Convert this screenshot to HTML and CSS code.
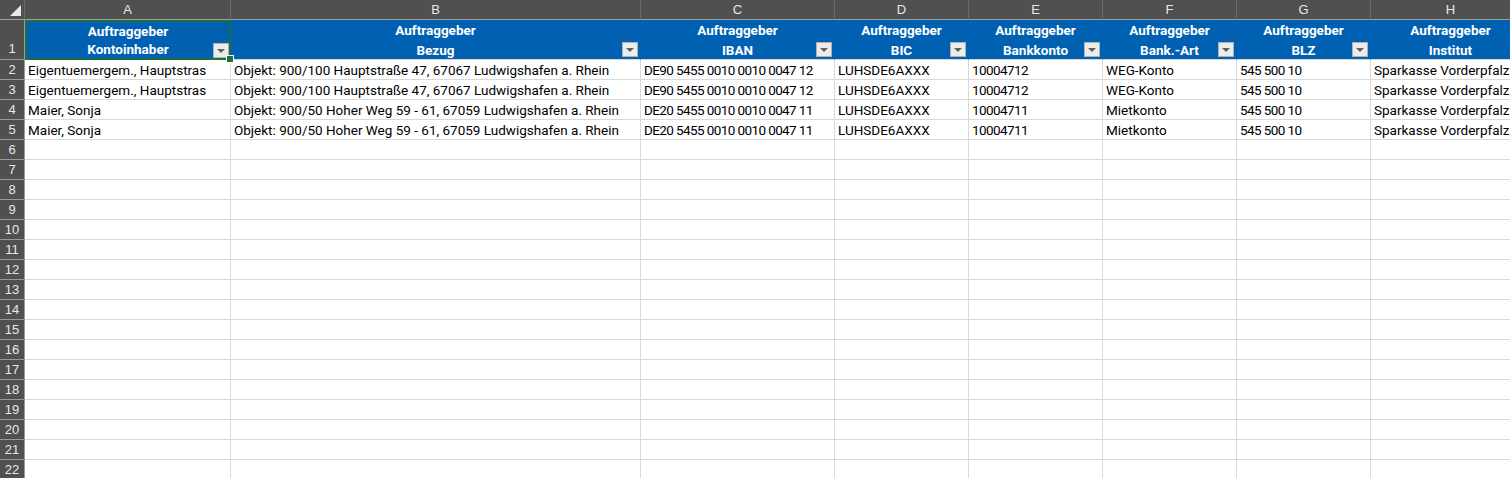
FILE: index.html
```html
<!DOCTYPE html>
<html lang="de">

<head>
    <meta charset="UTF-8">
    <title>Auftraggeber</title>
    <link rel="stylesheet" href="styles.css">
</head>

<body>
    <div class="sheet" id="sheet">
        <div class="corner"><span class="corner-tri"></span></div>
        <div class="col-head">A</div>
        <div class="col-head">B</div>
        <div class="col-head">C</div>
        <div class="col-head">D</div>
        <div class="col-head">E</div>
        <div class="col-head">F</div>
        <div class="col-head">G</div>
        <div class="col-head">H</div>

        <div class="row-head tall">1</div>
        <div class="th selected">Auftraggeber<br>Kontoinhaber<span class="filter"></span><span class="handle"></span></div>
        <div class="th">Auftraggeber<br>Bezug<span class="filter"></span></div>
        <div class="th">Auftraggeber<br>IBAN<span class="filter"></span></div>
        <div class="th">Auftraggeber<br>BIC<span class="filter"></span></div>
        <div class="th">Auftraggeber<br>Bankkonto<span class="filter"></span></div>
        <div class="th">Auftraggeber<br>Bank.-Art<span class="filter"></span></div>
        <div class="th">Auftraggeber<br>BLZ<span class="filter"></span></div>
        <div class="th">Auftraggeber<br>Institut</div>

        <div class="row-head">2</div>
        <div class="td">Eigentuemergem., Hauptstras</div>
        <div class="td">Objekt: 900/100 Hauptstraße 47, 67067 Ludwigshafen a. Rhein</div>
        <div class="td num">DE90 5455 0010 0010 0047 12</div>
        <div class="td">LUHSDE6AXXX</div>
        <div class="td num">10004712</div>
        <div class="td">WEG-Konto</div>
        <div class="td num">545 500 10</div>
        <div class="td">Sparkasse Vorderpfalz</div>

        <div class="row-head">3</div>
        <div class="td">Eigentuemergem., Hauptstras</div>
        <div class="td">Objekt: 900/100 Hauptstraße 47, 67067 Ludwigshafen a. Rhein</div>
        <div class="td num">DE90 5455 0010 0010 0047 12</div>
        <div class="td">LUHSDE6AXXX</div>
        <div class="td num">10004712</div>
        <div class="td">WEG-Konto</div>
        <div class="td num">545 500 10</div>
        <div class="td">Sparkasse Vorderpfalz</div>

        <div class="row-head">4</div>
        <div class="td">Maier, Sonja</div>
        <div class="td">Objekt: 900/50 Hoher Weg 59 - 61, 67059 Ludwigshafen a. Rhein</div>
        <div class="td num">DE20 5455 0010 0010 0047 11</div>
        <div class="td">LUHSDE6AXXX</div>
        <div class="td num">10004711</div>
        <div class="td">Mietkonto</div>
        <div class="td num">545 500 10</div>
        <div class="td">Sparkasse Vorderpfalz</div>

        <div class="row-head">5</div>
        <div class="td">Maier, Sonja</div>
        <div class="td">Objekt: 900/50 Hoher Weg 59 - 61, 67059 Ludwigshafen a. Rhein</div>
        <div class="td num">DE20 5455 0010 0010 0047 11</div>
        <div class="td">LUHSDE6AXXX</div>
        <div class="td num">10004711</div>
        <div class="td">Mietkonto</div>
        <div class="td num">545 500 10</div>
        <div class="td">Sparkasse Vorderpfalz</div>
    </div>

    <script>
        // empty rows 6..22
        const sheet = document.getElementById('sheet');
        for (let r = 6; r <= 22; r++) {
            const head = document.createElement('div');
            head.className = 'row-head';
            head.textContent = r;
            sheet.appendChild(head);
            for (let c = 0; c < 8; c++) {
                const cell = document.createElement('div');
                cell.className = 'td';
                sheet.appendChild(cell);
            }
        }
    </script>
</body>
</html>
```

FILE: styles.css
```css
body {
    margin: 0;
    background-color: #ffffff;
    overflow: hidden;
    font-family: "Roboto", "Liberation Sans", sans-serif;
}

.sheet {
    display: grid;
    grid-template-columns: 25px 206px 410px 194px 134px 134px 134px 134px 160px;
    grid-template-rows: 20px 40px;
    grid-auto-rows: 20px;
}

.corner {
    position: relative;
    background-color: #505050;
    border-right: 1px solid #6b6b6b;
    border-bottom: 1px solid #a0a0a0;
    box-sizing: border-box;
}

.corner-tri {
    position: absolute;
    right: 3px;
    bottom: 3px;
    width: 0;
    height: 0;
    border-left: 11px solid transparent;
    border-bottom: 11px solid #e8e8e8;
}

.col-head {
    background-color: #505050;
    color: #e8e8e8;
    font-family: "Liberation Sans", sans-serif;
    font-size: 13px;
    text-align: center;
    line-height: 19px;
    border-right: 1px solid #6b6b6b;
    border-bottom: 1px solid #a0a0a0;
    box-sizing: border-box;
}

.row-head {
    background-color: #505050;
    color: #e8e8e8;
    font-family: "Liberation Sans", sans-serif;
    font-size: 13px;
    text-align: center;
    line-height: 20px;
    border-bottom: 1px solid #9a9a9a;
    border-right: 1px solid #9a9a9a;
    box-sizing: border-box;
}

.row-head.tall {
    display: flex;
    align-items: flex-end;
    justify-content: center;
}

.th {
    position: relative;
    background-color: #0061b3;
    color: #ffffff;
    font-weight: bold;
    font-size: 13.5px;
    line-height: 20px;
    text-align: center;
    border-right: 1px solid #0061b3;
    border-bottom: 1px solid #d4d4d4;
    box-sizing: border-box;
}

.th.selected {
    border: 2px solid #1e6e42;
    line-height: 18px;
}

.filter {
    position: absolute;
    right: 2px;
    bottom: 2px;
    width: 16px;
    height: 15px;
    background-color: #ececec;
    border: 1px solid #b0b0b0;
    box-sizing: border-box;
}

.filter::after {
    content: "";
    position: absolute;
    left: 3px;
    top: 5px;
    border-left: 4.5px solid transparent;
    border-right: 4.5px solid transparent;
    border-top: 4px solid #606060;
}

.th.selected .filter {
    right: 0;
    bottom: 0;
}

.handle {
    position: absolute;
    right: -5px;
    bottom: -5px;
    width: 6px;
    height: 6px;
    background-color: #1e6e42;
    border: 1px solid #ffffff;
    z-index: 2;
}

.td {
    color: #000000;
    font-size: 13.5px;
    line-height: 20px;
    padding-left: 3px;
    white-space: nowrap;
    overflow: hidden;
    border-right: 1px solid #d9d9d9;
    border-bottom: 1px solid #d9d9d9;
    box-sizing: border-box;
}

/* digits run a little tighter */
.td.num {
    letter-spacing: -0.6px;
}
```
